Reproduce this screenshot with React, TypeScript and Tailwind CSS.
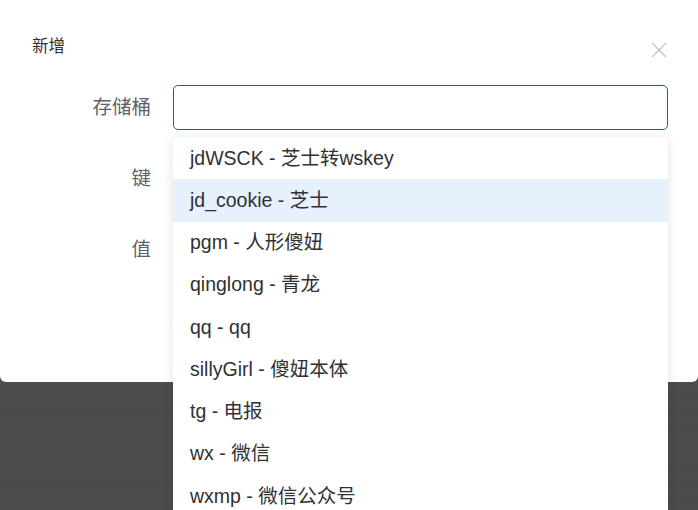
import React from 'react';

const buckets = [
    ['jdWSCK', '芝士转wskey'],
    ['jd_cookie', '芝士'],
    ['pgm', '人形傻妞'],
    ['qinglong', '青龙'],
    ['qq', 'qq'],
    ['sillyGirl', '傻妞本体'],
    ['tg', '电报'],
    ['wx', '微信'],
    ['wxmp', '微信公众号'],
];

const font = { fontFamily: '"Liberation Sans", Arial, "Noto Sans CJK SC", sans-serif' };

function FormRow({ label, children }: { label: string; children?: React.ReactNode }) {
    return (
        <div className="flex items-center h-[45px]">
            <div className="w-[151px] text-right text-[19.5px] text-[#606266]">{label}</div>
            <div className="ml-[22px] w-[495px] h-full">{children}</div>
        </div>
    );
}

export default function App() {
    return (
        <div className="relative w-[698px] h-[510px] overflow-hidden bg-[#4c4c4c]" style={font}>
            {/* 對話框 */}
            <div className="h-[382px] bg-white rounded-b-[6px]">
                <div className="flex items-center justify-between pl-[32px] pr-[31px] pt-[34px]">
                    <span className="text-[16.5px] leading-[20px] text-[#303133]">新增</span>
                    <svg className="w-[16px] h-[16px] mt-[8px] text-[#c0c4cc]" viewBox="0 0 16 16" fill="none" stroke="currentColor" strokeWidth={1.3}>
                        <path d="M1 1L15 15M15 1L1 15" />
                    </svg>
                </div>

                <div className="mt-[27px] flex flex-col gap-[26px]">
                    <FormRow label="存储桶">
                        <div className="h-full rounded-[5px] border border-[#2550d0] bg-white" />
                    </FormRow>
                    <FormRow label="键" />
                    <FormRow label="值" />
                </div>
            </div>

            {/* 背景表格 */}
            <div className="flex">
                <div className="w-[173px]">
                    <div className="h-[29px] border-b border-[#474747]" />
                    <div className="h-[75px] border-b border-[#474747]" />
                </div>
                <div className="flex-1" />
                <div className="w-[30px]">
                    <div className="h-[14px] border-b border-[#474747]" />
                    <div className="h-[15px] border-b border-[#474747]" />
                    <div className="h-[16px] border-b border-[#474747]" />
                    <div className="h-[44px] border-b border-[#474747]" />
                    <div className="h-[15px] border-b border-[#474747]" />
                    <div className="h-[15px] border-b border-[#474747]" />
                </div>
            </div>

            {/* 下拉選單 */}
            <div className="absolute left-[173px] top-[137px] w-[495px] rounded-[5px] bg-white shadow-[0_2px_12px_rgba(0,0,0,0.12)]">
                {buckets.map(([key, name], i) => (
                    <div
                        key={key}
                        className={`flex items-center h-[42.25px] pl-[17px] text-[19.5px] text-[#303133] ${i === 1 ? 'bg-[#e7f0fd]' : ''}`}
                    >
                        {key} - {name}
                    </div>
                ))}
            </div>
        </div>
    );
}
